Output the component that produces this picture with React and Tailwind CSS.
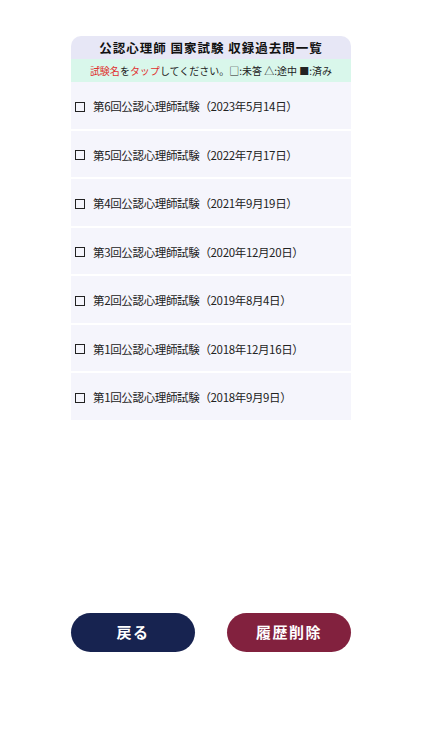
const exams = [
  "第6回公認心理師試験（2023年5月14日）",
  "第5回公認心理師試験（2022年7月17日）",
  "第4回公認心理師試験（2021年9月19日）",
  "第3回公認心理師試験（2020年12月20日）",
  "第2回公認心理師試験（2019年8月4日）",
  "第1回公認心理師試験（2018年12月16日）",
  "第1回公認心理師試験（2018年9月9日）",
];

const font = { fontFamily: '"Noto Sans CJK JP", "Noto Sans", sans-serif' };

export default function App() {
  return (
    <div className="flex h-[750px] w-[422px] flex-col bg-white" style={font}>
      <div className="mx-[71px] mt-[36px] w-[280px]">
        <div className="flex h-[23px] items-center justify-center rounded-t-[10px] bg-[#e7e7f6] pt-[1px] text-[12.5px] font-bold tracking-[0.08em] text-[#111]">
          公認心理師 国家試験 収録過去問一覧
        </div>
        <div className="flex h-[23px] items-center justify-center bg-[#d9f7eb] text-[10px] text-[#222]">
          <span className="text-[#e0302f]">試験名</span>を<span className="text-[#e0302f]">タップ</span>してください。□:未答 △:途中 ■:済み
        </div>
        <div className="flex flex-col gap-[2px]">
          {exams.map((e, i) => (
            <div key={i} className="flex h-[46.5px] items-center bg-[#f5f5fc] pl-[4px] pt-[3px] text-[11.5px] tracking-[-0.03em] text-[#222]">
              <span className="mr-[8px] inline-block h-[10px] w-[10px] border-[1.5px] border-[#222]" />
              {e}
            </div>
          ))}
        </div>
      </div>
      <div className="mt-auto mb-[98px] flex justify-between px-[71px]">
        <button className="h-[39px] w-[124px] rounded-full bg-[#172350] text-[15px] font-bold tracking-[0.1em] text-white">
          戻る
        </button>
        <button className="h-[39px] w-[124px] rounded-full bg-[#82213e] text-[15px] font-bold tracking-[0.1em] text-white">
          履歴削除
        </button>
      </div>
    </div>
  );
}
